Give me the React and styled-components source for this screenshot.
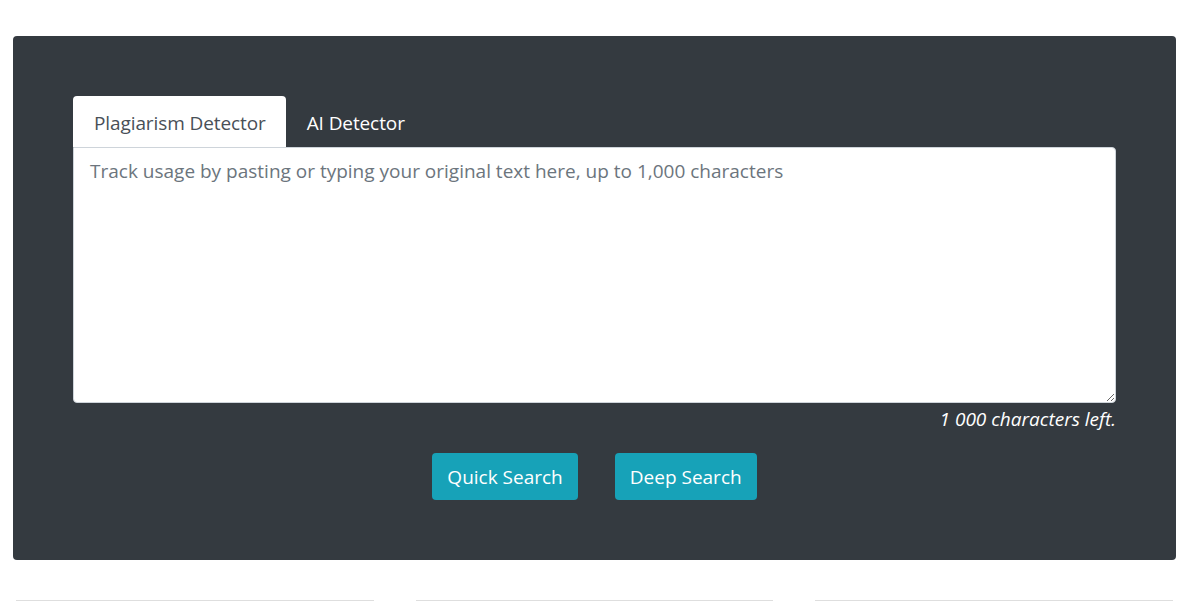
import React, { useState } from 'react'
import styled, { createGlobalStyle } from 'styled-components'

const MAX = 1000

const Global = createGlobalStyle`
  html, body {
    margin: 0;
    padding: 0;
    background: #fff;
    font-family: "Open Sans", "Noto Sans", sans-serif;
  }
`

const Page = styled.div`
  padding: 36px 8px 0 13px;
  height: 601px;
  overflow: hidden;
  box-sizing: border-box;
`

const Panel = styled.section`
  background: #343a40;
  border-radius: 4px;
  padding: 60px;
`

const Tabs = styled.ul`
  display: flex;
  margin: 0;
  padding: 0;
  list-style: none;
`

const Tab = styled.li`
  height: 51px;
  display: flex;
  align-items: center;
  padding: 2px 20px 0 21px;
  box-sizing: border-box;
  font-size: 19px;
  letter-spacing: -0.1px;
  border-radius: 4px 4px 0 0;
  cursor: pointer;
  background: ${(p) => (p.active ? '#fff' : 'transparent')};
  color: ${(p) => (p.active ? '#495057' : '#fff')};
`

const Area = styled.textarea`
  display: block;
  width: 100%;
  height: 256px;
  box-sizing: border-box;
  margin: 0;
  padding: 9px 16px;
  border: 1px solid #ced4da;
  border-radius: 0 4px 4px 4px;
  font-family: inherit;
  font-size: 19px;
  line-height: 1.5;
  color: #495057;
  resize: vertical;
  outline: none;

  &::placeholder {
    color: #6c757d;
  }
`

const Counter = styled.p`
  margin: 4px 0 0;
  text-align: right;
  font-style: italic;
  font-size: 19px;
  color: #fff;
  line-height: 24px;
`

const Actions = styled.div`
  display: flex;
  justify-content: center;
  gap: 37px;
  margin-top: 22px;
`

const Button = styled.button`
  height: 47px;
  padding: 0 15px;
  border: none;
  border-radius: 4px;
  background: #17a2b8;
  color: #fff;
  font-family: inherit;
  font-size: 19px;
  cursor: pointer;
`

const Cards = styled.div`
  display: grid;
  grid-template-columns: repeat(3, 1fr);
  gap: 42px;
  margin: 40px 3px 0 3px;
`

const Card = styled.div`
  height: 120px;
  border: 1px solid #dedede;
`

export default function App() {
  const [tab, setTab] = useState(0)
  const [text, setText] = useState('')
  const left = (MAX - text.length).toLocaleString('fr-FR').replace(/\u202f|\u00a0/g, ' ')

  return (
    <>
      <Global />
      <Page>
        <Panel>
          <Tabs>
            <Tab active={tab === 0} onClick={() => setTab(0)}>Plagiarism Detector</Tab>
            <Tab active={tab === 1} onClick={() => setTab(1)}>AI Detector</Tab>
          </Tabs>
          <Area
            maxLength={MAX}
            value={text}
            onChange={(e) => setText(e.target.value)}
            placeholder="Track usage by pasting or typing your original text here, up to 1,000 characters"
          />
          <Counter>{left} characters left.</Counter>
          <Actions>
            <Button>Quick Search</Button>
            <Button>Deep Search</Button>
          </Actions>
        </Panel>
        <Cards>
          <Card />
          <Card />
          <Card />
        </Cards>
      </Page>
    </>
  )
}
